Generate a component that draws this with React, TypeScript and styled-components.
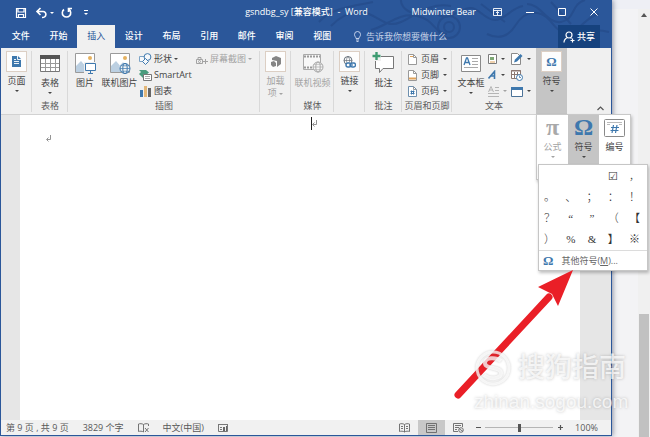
import React from "react";
import styled, { createGlobalStyle, css } from "styled-components";

const BLUE = "#2b579a";
const ICON_BLUE = "#3e78ad";
const INK = "#444444";
const FADED = "#a3a3a3";

const GlobalStyle = createGlobalStyle`
  * { box-sizing: border-box; }
  html, body, #root { height: 100%; }
  body {
    margin: 0;
    overflow: hidden;
    background: #f3f3f5;
    color: ${INK};
    font: 9px/12px "Open Sans", "Noto Sans CJK SC", sans-serif;
  }
  button, input {
    font: inherit;
    color: inherit;
    margin: 0;
    padding: 0;
    border: 0;
    background: none;
  }
  svg { display: block; flex: none; }
`;

/* ---------- frame ---------- */

const Desktop = styled.div`
  position: relative;
  display: flex;
  height: 100vh;
`;

const WordWindow = styled.main`
  flex: 1;
  min-width: 0;
  display: flex;
  flex-direction: column;
  margin-bottom: 1px;
  border: solid ${BLUE};
  border-width: 0 1px 1px;
  box-shadow: 1px 0 5px rgba(40, 50, 80, 0.5);
  z-index: 1;
`;

const Backdrop = styled.aside`
  width: 38px;
  display: flex;
  justify-content: flex-end;
  border-top: 9px solid #eeeff5;
`;

const OuterScroll = styled.div`
  width: 12px;
  display: flex;
  flex-direction: column;
  align-items: center;
  background: #f0f0f0;
  padding-top: 4px;
`;

const OuterThumb = styled.div`
  width: 10px;
  margin-top: auto;
  height: 29%;
  background: #c1c1c1;
`;

const Header = styled.header`
  position: relative;
  background: ${BLUE};
  color: #fff;
`;

const Pattern = styled.svg`
  position: absolute;
  top: 0;
  right: 0;
`;

const TitleBar = styled.div`
  position: relative;
  display: grid;
  grid-template-columns: 1fr auto 1fr;
  align-items: center;
  height: 25px;
  padding: 0 13px 2px 14px;
  font-weight: 500;
`;

const QuickAccess = styled.div`
  display: flex;
  align-items: center;
  gap: 6px;
  padding-top: 2px;
`;

const WindowTools = styled.div`
  display: flex;
  align-items: center;
  justify-content: flex-end;
  gap: 17px;
  white-space: nowrap;
`;

const WindowButtons = styled.div`
  display: flex;
  align-items: center;
  gap: 24px;
`;

const IconButton = styled.button`
  display: flex;
  align-items: center;
  gap: 2px;
`;

const TabRow = styled.div`
  position: relative;
  display: flex;
  height: 23px;
  padding-right: 11px;
`;

const Tabs = styled.nav`
  display: grid;
  grid-template-columns: repeat(9, 1fr);
  width: 339px;
  margin-left: 1px;
`;

const Tab = styled.button<{ $active?: boolean }>`
  font-weight: 500;
  padding-bottom: 1px;
  ${(p) => p.$active && css`
    background: #f0f0f0;
    color: ${BLUE};
    font-weight: 400;
  `}
`;

const TellMe = styled.label`
  flex: 1;
  display: flex;
  align-items: center;
  gap: 5px;
  margin-left: 13px;
  input {
    width: 100px;
    outline: 0;
    &::placeholder { color: #c3d0e6; opacity: 1; }
  }
`;

const Share = styled.button`
  display: flex;
  align-items: center;
  justify-content: center;
  gap: 2px;
  width: 42px;
  background: #16427e;
  font-weight: 500;
`;

/* ---------- ribbon ---------- */

const Ribbon = styled.section`
  display: flex;
  height: 67px;
  background: #f0f0f0;
  border-bottom: 1px solid #d2d2d2;
`;

const Group = styled.div<{ $w: number; $plain?: boolean; $pressed?: boolean }>`
  position: relative;
  display: flex;
  flex-direction: column;
  width: ${(p) => p.$w}px;
  padding-top: 3px;
  ${(p) => p.$pressed && "background: #c5c5c5;"}
  ${(p) => !p.$plain && css`
    &::after {
      content: "";
      position: absolute;
      right: 0;
      top: 3px;
      bottom: 2px;
      width: 1px;
      background: #d9d9d9;
    }
  `}
`;

const GroupBody = styled.div<{ $start?: boolean }>`
  flex: 1;
  display: flex;
  justify-content: ${(p) => (p.$start ? "flex-start" : "center")};
  padding-left: ${(p) => (p.$start ? 2 : 0)}px;
`;

const GroupLabel = styled.div`
  height: 14px;
  text-align: center;
  white-space: nowrap;
  color: #5c5c5c;
`;

const BigButton = styled.button<{ $w: number; $off?: boolean }>`
  display: flex;
  flex-direction: column;
  align-items: center;
  align-self: flex-start;
  width: ${(p) => p.$w}px;
  white-space: nowrap;
  color: ${(p) => (p.$off ? FADED : INK)};
`;

const IconBox = styled.span<{ $framed?: boolean }>`
  display: flex;
  align-items: center;
  justify-content: center;
  width: 22px;
  height: ${(p) => (p.$framed ? 21 : 23)}px;
  margin-bottom: 3px;
  ${(p) => p.$framed && "width: 21px; background: #fdfdfd; border: 1px solid #dccfc4;"}
`;

const SmallButton = styled.button<{ $off?: boolean }>`
  display: flex;
  align-items: center;
  gap: 4px;
  height: 16px;
  white-space: nowrap;
  color: ${(p) => (p.$off ? FADED : INK)};
`;

const Column = styled.div<{ $w: number; $tight?: boolean }>`
  width: ${(p) => p.$w}px;
  display: flex;
  flex-direction: column;
  ${(p) => p.$tight && css`
    ${SmallButton} { gap: 2px; }
  `}
`;

const Caret = styled.i<{ $top?: number; $inline?: boolean }>`
  ${(p) => p.$inline && "display: inline-block; vertical-align: middle;"}
  flex: none;
  border: solid transparent;
  border-width: 2px 2px 0;
  border-top-color: currentColor;
  margin-top: ${(p) => p.$top || 0}px;
`;

const Collapse = styled.button`
  align-self: flex-end;
  margin: 0 7px 3px auto;
`;

/* ---------- pop-ups ---------- */

const SymbolPanel = styled.div`
  position: absolute;
  z-index: 3;
  top: 66px;
  left: 0;
  width: 95px;
  height: 66px;
  display: flex;
  align-items: flex-start;
  background: #fff;
  border: 1px solid #c9c9c9;
  box-shadow: 1px 2px 3px rgba(0, 0, 0, 0.25);
`;

const PanelButton = styled.button<{ $active?: boolean; $off?: boolean }>`
  flex: 1;
  display: flex;
  flex-direction: column;
  align-items: center;
  height: 49px;
  padding-top: 3px;
  color: ${(p) => (p.$off ? FADED : INK)};
  background: ${(p) => (p.$active ? "#c5c5c5" : "none")};
`;

const PanelGlyph = styled.span<{ $tint: string }>`
  display: flex;
  align-items: center;
  justify-content: center;
  height: 19px;
  margin-bottom: 4px;
  color: ${(p) => p.$tint};
  font: bold 24px/19px "Liberation Serif", serif;
`;

const Omega = styled.span`
  color: ${ICON_BLUE};
  font: bold 13px/14px "Liberation Serif", serif;
`;

const SymbolMenu = styled.div`
  position: absolute;
  top: 49px;
  left: 1px;
  width: 110px;
  background: #fff;
  border: 1px solid #c6c6c6;
  box-shadow: 1px 2px 3px rgba(0, 0, 0, 0.25);
`;

const SymbolGrid = styled.div`
  display: grid;
  grid-template-columns: repeat(5, 1fr);
  grid-auto-rows: 21px;
  padding: 1px 2px 0 0;
`;

const SymbolCell = styled.button`
  font: 300 11px/21px "Liberation Serif", "Noto Sans CJK SC", serif;
  color: #333;
`;

const MoreSymbols = styled.button`
  display: flex;
  align-items: center;
  gap: 8px;
  width: 100%;
  height: 20px;
  padding-left: 4px;
  border-top: 1px solid #dcdcdc;
  white-space: nowrap;
  color: #666;
`;

/* ---------- document and status bar ---------- */

const Workspace = styled.section`
  flex: 1;
  min-height: 0;
  display: flex;
  background: #e6e6e6;
  padding: 0 31px 0 19px;
`;

const Paper = styled.article`
  flex: 1;
  background: #fff;
  padding-top: 2px;
`;

const CursorLine = styled.p`
  margin: 0 0 0 52%;
  display: flex;
  align-items: center;
  height: 13px;
  border-left: 1px solid #222;
`;

const TextLine = styled.p`
  margin: 5px 0 0 26px;
`;

const StatusBar = styled.footer`
  display: flex;
  align-items: center;
  justify-content: space-between;
  height: 15px;
  background: #f1f1f1;
  color: #595959;
`;

const StatusSide = styled.div<{ $gap: number }>`
  display: flex;
  align-items: center;
  gap: ${(p) => p.$gap}px;
  height: 100%;
  padding: 0 13px 0 5px;
  white-space: nowrap;
`;

const ViewGroup = styled.div`
  display: flex;
  height: 100%;
`;

const ViewButton = styled.button<{ $active?: boolean }>`
  display: flex;
  align-items: center;
  justify-content: center;
  width: 27px;
  height: 100%;
  background: ${(p) => (p.$active ? "#c8c8c8" : "none")};
`;

const Zoom = styled.input`
  appearance: none;
  width: 68px;
  height: 9px;
  background: linear-gradient(#b5b5b5, #b5b5b5) center / 100% 1px no-repeat;
  &::-webkit-slider-thumb {
    appearance: none;
    width: 3px;
    height: 8px;
    background: #555;
  }
`;

const ZoomValue = styled.span`
  margin-left: 7px;
`;

/* ---------- overlay ---------- */

const Overlay = styled.div`
  position: absolute;
  z-index: 2;
  right: 0;
  bottom: 0;
  pointer-events: none;
`;

const Watermark = styled.div`
  position: absolute;
  z-index: 4;
  right: 22px;
  bottom: 22px;
  width: 154px;
  color: rgba(255, 255, 255, 0.75);
  text-shadow: 0 0 3px rgba(100, 100, 100, 0.4);
  font-family: "Liberation Sans", "Noto Sans CJK SC", sans-serif;
  pointer-events: none;
`;

const Brand = styled.div`
  display: flex;
  align-items: center;
  gap: 6px;
  height: 38px;
  font-size: 27px;
  font-weight: 500;
  white-space: nowrap;
  svg { filter: drop-shadow(0 0 1px rgba(100, 100, 100, 0.4)); }
`;

const BrandUrl = styled.div`
  padding-top: 2px;
  font-size: 19px;
  line-height: 26px;
  white-space: nowrap;
`;

/* ---------- icons ---------- */

const Globe = ({ x, y, c }: { x: number; y: number; c: string }) => (
  <g transform={`translate(${x} ${y})`} fill="#f5f5f5" stroke={c}>
    <circle r="5" />
    <ellipse rx="2.2" ry="5" fill="none" />
    <path d="M-5 0H5M-4 -2.7H4M-4 2.7H4" strokeWidth=".7" />
  </g>
);

const PictureIcon = ({ online }: { online?: boolean }) => (
  <svg width="22" height="22" viewBox="0 0 22 22">
    <path d="M1.500 1.500h19v19h-19z" fill="#fff" stroke="#9a9a9a" />
    <path d="M2 20V14l5-5 7 8v3z" fill="#bcd0e2" />
    <path d="M10 14l4-4 6 6v4H12z" fill="#d5e1ec" />
    <circle cx="16" cy="6" r="2" fill="#e5b15f" />
    {online ? (
      <Globe x={16} y={16.500} c={ICON_BLUE} />
    ) : (
      <>
        <path d="M10 10h12v12H10z" fill="#f0f0f0" />
        <path d="M11.500 11.500h10v7h-10z" fill="#fff" stroke={ICON_BLUE} />
        <path d="M16.500 19v2M14 21.500h5" stroke={ICON_BLUE} />
      </>
    )}
  </svg>
);

const TableIcon = () => (
  <svg width="22" height="20" viewBox="0 0 22 20">
    <path d="M1.500 2.500h19v16h-19z" fill="#fff" stroke="#777" />
    <path d="M1 2h20v4H1z" fill="#555" />
    <path d="M6.500 6v12M11.500 6v12M16.500 6v12M2 10.500h18M2 14.500h18" stroke="#999" />
  </svg>
);

const PageIcon = () => (
  <svg width="9" height="11" viewBox="0 0 9 11">
    <path d="M0 0h6l3 3v8H0z" fill={ICON_BLUE} />
    <path d="M5.500 0v3.500H9M2 5.500h5M2 7.500h5M2 3.500h2" stroke="#fff" fill="none" strokeWidth=".9" />
  </svg>
);

const ShapesIcon = () => (
  <svg width="13" height="12" viewBox="0 0 13 12" fill="#f5f8fb" stroke={ICON_BLUE}>
    <path d="M.5 3.500h6v5h-6z" stroke="#7da4c7" />
    <circle cx="8.500" cy="4" r="3.400" />
    <path d="M6.500 5.500l3 3-3 3-3-3z" />
  </svg>
);

const SmartArtIcon = () => (
  <svg width="13" height="12" viewBox="0 0 13 12">
    <path d="M0 1h7l3 2.500L7 6H4v3L0 5l2-2z" fill="#4a9b7d" />
    <path d="M4.500 5.500h8v6h-8z" fill="#fff" stroke="#777" />
    <path d="M6 7.500h5M6 9.500h5" stroke="#aaa" />
  </svg>
);

const ChartIcon = () => (
  <svg width="13" height="12" viewBox="0 0 13 12">
    <path d="M1 5h3v7H1z" fill={ICON_BLUE} />
    <path d="M5 1h3v11H5z" fill="#e3b778" />
    <path d="M9 3h3v9H9z" fill="#666" />
  </svg>
);

const ScreenshotIcon = () => (
  <svg width="12" height="14" viewBox="0 0 12 14" fill="none" stroke={FADED}>
    <path d="M.5 7.500h6v4h-6zM2 7V5.500h3V7M9.500 7v5M7 9.500h5" />
    <circle cx="3.500" cy="9.500" r="1" />
  </svg>
);

const AddInIcon = () => (
  <svg width="12" height="12" viewBox="0 0 12 12" fill="#858585">
    <path d="M6 0l5 2v6l-4 3V5L2 4V2z" />
    <path d="M1 6l3-1 2 2v3l-3 1-2-2z" />
  </svg>
);

const VideoIcon = () => (
  <svg width="22" height="20" viewBox="0 0 22 20">
    <path d="M1.500 1.500h17v15h-17z" fill="#f8f8f8" stroke="#aaa" />
    <path d="M2 3.500h16M2 14.500h16" stroke="#999" strokeWidth="2" strokeDasharray="2 1" />
    <Globe x={16} y={14} c="#aaa" />
  </svg>
);

const LinkIcon = () => (
  <svg width="13" height="12" viewBox="0 0 13 12" fill="none" stroke={ICON_BLUE}>
    <circle cx="5" cy="4.500" r="4" stroke="#66707a" />
    <path d="M1 4.500h8M5 .5c-2 2-2 6 0 8M5 .5c2 2 2 5 1 6" strokeWidth=".7" stroke="#66707a" />
    <rect x="3" y="7" width="5" height="4" rx="2" fill="#fdfdfd" strokeWidth="1.400" />
    <rect x="7.500" y="7" width="5" height="4" rx="2" fill="#fdfdfd" strokeWidth="1.400" />
    <path d="M6 9h4" strokeWidth="1.200" />
  </svg>
);

const CommentIcon = () => (
  <svg width="23" height="22" viewBox="0 0 23 22">
    <path d="M3.500 4.500h18v12H11l-3.500 4v-4h-4z" fill="#fff" stroke="#777" />
    <path d="M0 0h9v9H0z" fill="#f0f0f0" />
    <path d="M4.500 0v8M.5 4h8" stroke="#3d9b71" strokeWidth="2.400" />
  </svg>
);

const DocIcon = ({ kind }: { kind: "top" | "bottom" | "number" }) => (
  <svg width="9" height="11" viewBox="0 0 9 11">
    <path d="M.5 .5h5l3 3v7h-8z" fill="#fff" stroke={kind === "number" ? "#6d8fae" : "#999"} />
    <path d="M5.500 .5v3h3" fill="none" stroke="#999" />
    {kind === "top" && <path d="M2 2.500h3" stroke="#e0a35a" />}
    {kind === "bottom" && <path d="M1 8.500h7" stroke="#e0a35a" strokeWidth="2" />}
    {kind === "number" && <path d="M3.500 4.500v4M5.500 4.500v4M2.500 5.500h4M2.500 7.500h4" stroke={ICON_BLUE} />}
  </svg>
);

const TextBoxIcon = () => (
  <svg width="22" height="20" viewBox="0 0 22 20">
    <path d="M1.500 2.500h19v16h-19z" fill="#fff" stroke="#8a8a8a" />
    <path d="M4 12l2.500-7h1L10 12M5 9.500h4" stroke={ICON_BLUE} fill="none" strokeWidth="1.300" />
    <path d="M12 5.500h6M12 8.500h6M12 11.500h6M4 14.500h14" stroke="#aaa" />
  </svg>
);

const PartsIcon = () => (
  <svg width="9" height="10" viewBox="0 0 9 10">
    <path d="M.5 .5h8v9h-8z" fill="#fff" stroke="#7b7b7b" />
    <path d="M2 3h4v3H2z" fill="#7ea875" />
    <path d="M2 8h5" stroke="#e0a35a" />
  </svg>
);

const WordArtIcon = () => (
  <svg width="9" height="10" viewBox="0 0 9 10" fill="none" stroke={ICON_BLUE} strokeWidth="1.600">
    <path d="M.5 8.500L6.500 1.500V9M2.500 6h4" />
  </svg>
);

const DropCapIcon = () => (
  <svg width="11" height="11" viewBox="0 0 11 11" fill="none" stroke="#b5b5b5">
    <path d="M.5 6L3 .5 5.500 6M1 4h4M7 1.500h4M7 4.500h4M0 7.500h11M0 10.500h11" />
  </svg>
);

const SignatureIcon = () => (
  <svg width="12" height="12" viewBox="0 0 12 12">
    <path d="M.5 .5h6l3 3v8h-9z" fill="#fff" stroke="#8a8a8a" />
    <path d="M3 9.500l1-3 5.500-5.500 2 2L6 8.500z" fill={ICON_BLUE} />
  </svg>
);

const DateIcon = () => (
  <svg width="12" height="12" viewBox="0 0 12 12">
    <path d="M.5 1.500h9v8h-9z" fill="#fff" stroke="#8b7770" />
    <path d="M0 2h10M.5 5.500h9M3.500 3v6M6.500 3v6" stroke="#8b7770" />
    <circle cx="8.500" cy="8.500" r="3" fill="#fff" stroke={ICON_BLUE} />
    <path d="M8.500 6.500v2H10" fill="none" stroke={ICON_BLUE} strokeWidth=".8" />
  </svg>
);

const ObjectIcon = () => (
  <svg width="12" height="11" viewBox="0 0 12 11">
    <path d="M.5 1.500h11v9H.5z" fill="#fff" stroke="#4c7398" />
    <path d="M0 1h12v3H0z" fill={ICON_BLUE} />
  </svg>
);

const NumberIcon = () => (
  <svg width="21" height="18" viewBox="0 0 21 18">
    <rect x=".5" y=".5" width="20" height="17" rx="1" fill="#fff" stroke="#8a8a8a" />
    <path d="M3 3.500h15M3 5.500h3M15 5.500h3" stroke="#bbb" />
    <path d="M9.500 6l-1.500 8M13 6l-1.500 8M7 8.500h8M6.500 11.500h8" stroke={ICON_BLUE} strokeWidth="1.200" />
  </svg>
);

const ReturnMark = () => (
  <svg width="6" height="7" viewBox="0 0 6 7" fill="none" stroke="#888">
    <path d="M4.500 0v4.500H1M2.500 2.500l-2 2 2 2" strokeWidth=".9" />
  </svg>
);

const BookIcon = ({ check }: { check?: boolean }) => (
  <svg width="11" height="10" viewBox="0 0 11 10" fill="none" stroke="#666" strokeWidth=".9">
    <path d="M5.500 1.500C4 .5 2 .5 .5 1v7.500c1.500-.5 3.500-.5 5 .5zM5.500 1.500c1.500-1 3.500-1 5-.5v2" />
    {check ? (
      <path d="M7 5l3.500 4M10.500 5L7 9" />
    ) : (
      <path d="M5.500 9c1.500-1 3.500-1 5-.5V2M2 3.500h2M2 5.500h2M7 3.500h2M7 5.500h2" />
    )}
  </svg>
);

const LayoutIcon = ({ web }: { web?: boolean }) => (
  <svg width="11" height="10" viewBox="0 0 11 10" fill="none" stroke="#666" strokeWidth=".9">
    {web ? (
      <>
        <path d="M9.500 4V.5h-9v8H5M2 2.500h6M2 4.500h4M2 6.500h2" />
        <circle cx="8" cy="7" r="2.300" />
        <path d="M6 5.500l4 3" />
      </>
    ) : (
      <path d="M.5 .5h10v9H.5zM2 2.500h7M2 4.500h7M2 6.500h7" />
    )}
  </svg>
);

/* ---------- content ---------- */

const tabs = ["文件", "开始", "插入", "设计", "布局", "引用", "邮件", "审阅", "视图"];
const symbols = ["", "", "", "☑", "，", "。", "、", "；", "：", "！", "？", "“", "”", "（", "【", "）", "%", "&", "】", "※"];

type BigProps = {
  w: number;
  icon: React.ReactNode;
  label: React.ReactNode;
  framed?: boolean;
  caret?: boolean;
  off?: boolean;
};

const Big = ({ w, icon, label, framed, caret, off }: BigProps) => (
  <BigButton $w={w} $off={off}>
    <IconBox $framed={framed}>{icon}</IconBox>
    <span>{label}</span>
    {caret && <Caret $top={3} />}
  </BigButton>
);

const Small = ({ icon, label, caret, off }: { icon: React.ReactNode; label?: string; caret?: boolean; off?: boolean }) => (
  <SmallButton $off={off}>
    {icon}
    {label && <span>{label}</span>}
    {caret && <Caret />}
  </SmallButton>
);

export default function App() {
  return (
    <Desktop>
      <GlobalStyle />
      <WordWindow>
        <Header>
          <Pattern width="300" height="48" viewBox="0 0 300 48" fill="none" stroke="#264e8e" strokeWidth="2">
            <path d="M8 22C20 8 42 6 62 2M20 26c12-12 24-18 38-12s18 14 32 8S118 2 140 6M60 30c16-4 28-18 46-14s16 16 30 18M90 -4c-2 14 14 22 24 14" />
            <circle cx="138" cy="27" r="11" />
            <circle cx="138" cy="27" r="5" />
            <path d="M120 8c4 6 10 10 18 8s14-8 22-8 14 12 24 12 16-12 28-14M176 34c12 6 22 2 28-8s14-16 26-12 12 18 26 18 16-14 32-18M216 4c14 0 20 20 34 18s10-18 24-22M262 40c8-8 20-12 36-8M170 4l24 18M240 2l20 22" />
          </Pattern>
          <TitleBar>
            <QuickAccess>
              <IconButton aria-label="保存">
                <svg width="12" height="12" viewBox="0 0 12 12" fill="none" stroke="#fff" strokeWidth="1.200">
                  <path d="M1.500 1.500h9v9h-9zM3 1.500v3.500h6V1.500M3.500 10.500v-3h5v3" />
                </svg>
              </IconButton>
              <IconButton aria-label="撤消">
                <svg width="15" height="12" viewBox="0 0 15 12" fill="none" stroke="#fff" strokeWidth="1.600">
                  <path d="M7.500 1L4 4.500 7.500 8M4.500 4.500H10c4 0 4 6-1 6" />
                </svg>
                <Caret />
              </IconButton>
              <IconButton aria-label="重复">
                <svg width="13" height="12" viewBox="0 0 13 12" fill="none" stroke="#fff" strokeWidth="1.600">
                  <path d="M4 2.500a4.200 4.200 0 1 0 5 0M12 1.500H8.500V5" />
                </svg>
              </IconButton>
              <IconButton aria-label="自定义快速访问工具栏">
                <svg width="12" height="8" viewBox="0 0 12 8" fill="#fff">
                  <path d="M5 1h4v1H5zM5 4h4L7 6z" />
                </svg>
              </IconButton>
            </QuickAccess>
            <span>gsndbg_sy [兼容模式]&nbsp; - &nbsp;Word</span>
            <WindowTools>
              <span>Midwinter Bear</span>
              <WindowButtons>
                <IconButton aria-label="功能区显示选项">
                  <svg width="9" height="8" viewBox="0 0 9 8" fill="none" stroke="#fff" strokeWidth=".9">
                    <path d="M.5 .5h8v7h-8zM.5 2.500h8M4.500 7V3.500M3 5l1.500-1.500L6 5" />
                  </svg>
                </IconButton>
                <IconButton aria-label="最小化">
                  <svg width="8" height="8" viewBox="0 0 8 8" stroke="#fff"><path d="M0 4.500h8" /></svg>
                </IconButton>
                <IconButton aria-label="最大化">
                  <svg width="8" height="8" viewBox="0 0 8 8" fill="none" stroke="#fff"><path d="M.5 .5h7v7h-7z" /></svg>
                </IconButton>
                <IconButton aria-label="关闭">
                  <svg width="8" height="8" viewBox="0 0 8 8" stroke="#fff"><path d="M.5 .5l7 7M7.500 .5l-7 7" /></svg>
                </IconButton>
              </WindowButtons>
            </WindowTools>
          </TitleBar>
          <TabRow>
            <Tabs>
              {tabs.map((t) => (
                <Tab key={t} $active={t === "插入"}>{t}</Tab>
              ))}
            </Tabs>
            <TellMe>
              <svg width="7" height="11" viewBox="0 0 7 11" fill="none" stroke="#d5def0" strokeWidth=".9">
                <path d="M2 7.500C2 6 .5 5.500 .5 3.500a3 3 0 0 1 6 0C6.500 5.500 5 6 5 7.500zM2 9h3M2.500 10.500h2" />
              </svg>
              <input aria-label="告诉我你想要做什么" placeholder="告诉我你想要做什么" />
            </TellMe>
            <Share>
              <svg width="12" height="12" viewBox="0 0 12 12" fill="none" stroke="#fff" strokeWidth="1.200">
                <circle cx="6" cy="4" r="3" />
                <path d="M1 11.500c0-3 1.500-4 3.500-5M7.500 6.500l1 1M9.500 7.500v4M7.500 9.500h4" />
              </svg>
              共享
            </Share>
          </TabRow>
        </Header>

        <Ribbon>
          <Group $w={31}>
            <GroupBody><Big w={30} framed caret icon={<PageIcon />} label="页面" /></GroupBody>
          </Group>
          <Group $w={36}>
            <GroupBody><Big w={34} caret icon={<TableIcon />} label="表格" /></GroupBody>
            <GroupLabel>表格</GroupLabel>
          </Group>
          <Group $w={192}>
            <GroupBody $start>
              <Big w={30} icon={<PictureIcon />} label="图片" />
              <Big w={39} icon={<PictureIcon online />} label="联机图片" />
              <Column $w={57} $tight>
                <Small icon={<ShapesIcon />} label="形状" caret />
                <Small icon={<SmartArtIcon />} label="SmartArt" />
                <Small icon={<ChartIcon />} label="图表" />
              </Column>
              <Column $w={58} $tight>
                <Small off icon={<ScreenshotIcon />} label="屏幕截图" caret />
              </Column>
            </GroupBody>
            <GroupLabel>插图</GroupLabel>
          </Group>
          <Group $w={31}>
            <GroupBody>
              <Big w={30} framed off icon={<AddInIcon />} label={<>加载<br />项 <Caret $inline /></>} />
            </GroupBody>
          </Group>
          <Group $w={43}>
            <GroupBody><Big w={40} off icon={<VideoIcon />} label="联机视频" /></GroupBody>
            <GroupLabel>媒体</GroupLabel>
          </Group>
          <Group $w={31}>
            <GroupBody><Big w={30} framed caret icon={<LinkIcon />} label="链接" /></GroupBody>
          </Group>
          <Group $w={37}>
            <GroupBody><Big w={34} icon={<CommentIcon />} label="批注" /></GroupBody>
            <GroupLabel>批注</GroupLabel>
          </Group>
          <Group $w={50}>
            <GroupBody>
              <Column $w={38}>
                <Small icon={<DocIcon kind="top" />} label="页眉" caret />
                <Small icon={<DocIcon kind="bottom" />} label="页脚" caret />
                <Small icon={<DocIcon kind="number" />} label="页码" caret />
              </Column>
            </GroupBody>
            <GroupLabel>页眉和页脚</GroupLabel>
          </Group>
          <Group $w={84} $plain>
            <GroupBody $start>
              <Big w={34} caret icon={<TextBoxIcon />} label="文本框" />
              <Column $w={23}>
                <Small icon={<PartsIcon />} caret />
                <Small icon={<WordArtIcon />} caret />
                <Small off icon={<DropCapIcon />} caret />
              </Column>
              <Column $w={21}>
                <Small icon={<SignatureIcon />} caret />
                <Small icon={<DateIcon />} />
                <Small icon={<ObjectIcon />} caret />
              </Column>
            </GroupBody>
            <GroupLabel>文本</GroupLabel>
          </Group>
          <Group $w={31} $plain $pressed>
            <GroupBody><Big w={31} framed caret icon={<Omega>Ω</Omega>} label="符号" /></GroupBody>
            <SymbolPanel>
              <PanelButton $off>
                <PanelGlyph $tint="#a9a9a9">π</PanelGlyph>
                <span>公式</span>
                <Caret $top={3} />
              </PanelButton>
              <PanelButton $active>
                <PanelGlyph $tint={ICON_BLUE}>Ω</PanelGlyph>
                <span>符号</span>
                <Caret $top={3} />
              </PanelButton>
              <PanelButton>
                <PanelGlyph $tint={ICON_BLUE}><NumberIcon /></PanelGlyph>
                <span>编号</span>
              </PanelButton>
              <SymbolMenu>
                <SymbolGrid>
                  {symbols.map((s, i) => (
                    <SymbolCell key={i} aria-label={s || "空格"}>{s}</SymbolCell>
                  ))}
                </SymbolGrid>
                <MoreSymbols>
                  <Omega>Ω</Omega>
                  <span>其他符号(<u>M</u>)...</span>
                </MoreSymbols>
              </SymbolMenu>
            </SymbolPanel>
          </Group>
          <Collapse aria-label="折叠功能区">
            <svg width="7" height="5" viewBox="0 0 7 5" fill="none" stroke="#555" strokeWidth="1.200">
              <path d="M.5 4l3-3 3 3" />
            </svg>
          </Collapse>
        </Ribbon>

        <Workspace>
          <Paper>
            <CursorLine><ReturnMark /></CursorLine>
            <TextLine><ReturnMark /></TextLine>
          </Paper>
        </Workspace>

        <StatusBar>
          <StatusSide $gap={14}>
            <span>第 9 页 , 共 9 页</span>
            <span>3829 个字</span>
            <BookIcon check />
            <span>中文(中国)</span>
            <svg width="10" height="9" viewBox="0 0 10 9" fill="none" stroke="#777">
              <path d="M0 1.500h10M.5 2v6.500h9V2M2 4.500h2M2 6.500h2" />
              <path d="M5 4h2v4H5zM8 3h1v5H8z" fill="#666" stroke="none" />
            </svg>
          </StatusSide>
          <StatusSide $gap={4}>
            <ViewGroup>
              <ViewButton aria-label="阅读视图"><BookIcon /></ViewButton>
              <ViewButton $active aria-label="页面视图"><LayoutIcon /></ViewButton>
              <ViewButton aria-label="Web 版式视图"><LayoutIcon web /></ViewButton>
            </ViewGroup>
            <IconButton aria-label="缩小">
              <svg width="5" height="7" viewBox="0 0 5 7" stroke="#555"><path d="M0 3.500h5" /></svg>
            </IconButton>
            <Zoom type="range" min="0" max="200" defaultValue="100" aria-label="显示比例" />
            <IconButton aria-label="放大">
              <svg width="7" height="7" viewBox="0 0 7 7" stroke="#555"><path d="M1 3.500h5M3.500 1v5" strokeWidth="1.200" /></svg>
            </IconButton>
            <ZoomValue>100%</ZoomValue>
          </StatusSide>
        </StatusBar>
      </WordWindow>

      <Backdrop>
        <OuterScroll>
          <svg width="6" height="4" viewBox="0 0 6 4"><path d="M0 4l3-4 3 4z" fill="#555" /></svg>
          <OuterThumb />
        </OuterScroll>
      </Backdrop>

      <Overlay>
        <svg width="200" height="172" viewBox="0 0 200 172">
          <path d="M8 130L99 32" stroke="#ea1f27" strokeWidth="7" strokeLinecap="round" />
          <path d="M123 5L108 41l-6-12-14-7z" fill="#ea1f27" />
        </svg>
      </Overlay>
      <Watermark>
        <Brand>
          <svg width="38" height="38" viewBox="0 0 38 38" fill="none" stroke="#fff" strokeOpacity=".75">
            <circle cx="19" cy="19" r="16" strokeWidth="3" />
            <path d="M27 12c-5-4-16-4-16 2 0 7 16 3 16 10 0 6-11 7-17 2" strokeWidth="4" />
          </svg>
          搜狗指南
        </Brand>
        <BrandUrl>zhinan.sogou.com</BrandUrl>
      </Watermark>
    </Desktop>
  );
}
